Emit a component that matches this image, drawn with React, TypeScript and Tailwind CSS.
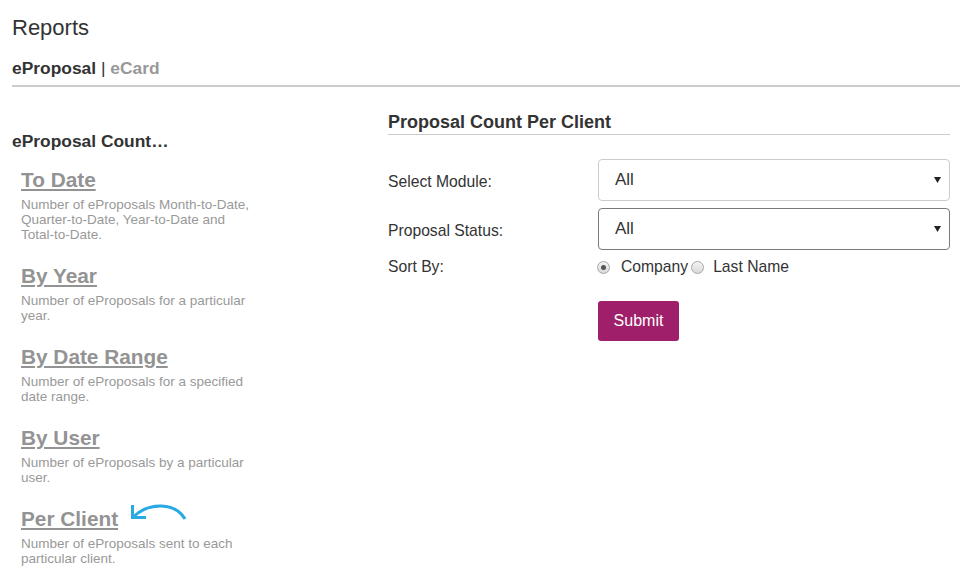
import { ChangeEvent, useState } from 'react';

interface ReportLink {
  title: string;
  desc: string;
}

const reportLinks: ReportLink[] = [
  {
    title: 'To Date',
    desc: 'Number of eProposals Month-to-Date, Quarter-to-Date, Year-to-Date and Total-to-Date.',
  },
  { title: 'By Year', desc: 'Number of eProposals for a particular year.' },
  { title: 'By Date Range', desc: 'Number of eProposals for a specified date range.' },
  { title: 'By User', desc: 'Number of eProposals by a particular user.' },
  { title: 'Per Client', desc: 'Number of eProposals sent to each particular client.' },
];

// Hand-drawn looking blue arrow pointing back at the "Per Client" link.
function CurvedArrow() {
  return (
    <svg
      width="58"
      height="22"
      viewBox="0 0 58 22"
      fill="none"
      stroke="#29abe2"
      strokeWidth="3"
      className="-mt-[8px] ml-[12px] shrink-0"
      aria-hidden="true"
    >
      <path d="M55 19 C45 2 19 2 3 17" />
      <path d="M2.5 5 L2.5 17.5 L16 17.5" />
    </svg>
  );
}

function SelectField({
  label,
  value,
  onChange,
  hovered,
}: {
  label: string;
  value: string;
  onChange: (e: ChangeEvent<HTMLSelectElement>) => void;
  hovered?: boolean;
}) {
  return (
    <div className="flex items-center">
      <label className="w-[210px] shrink-0 pt-[4px] text-[15.7px] text-[#333]">{label}</label>
      <div className="relative flex-1">
        <select
          value={value}
          onChange={onChange}
          className={`h-[42px] w-full appearance-none rounded-[4px] border bg-white pl-[16px] text-[17px] text-[#333] outline-none ${
            hovered ? 'border-[#7a7a7a]' : 'border-[#cccccc]'
          }`}
        >
          <option>All</option>
          <option>Active</option>
          <option>Archived</option>
        </select>
        {/* caret sits over the native select, which has appearance-none */}
        <svg
          width="7"
          height="6"
          viewBox="0 0 7 6"
          className="pointer-events-none absolute right-[9px] top-[18px]"
          aria-hidden="true"
        >
          <polygon points="0,0 7,0 3.5,6" fill="#222" />
        </svg>
      </div>
    </div>
  );
}

function Radio({ checked, label, onClick }: { checked: boolean; label: string; onClick: () => void }) {
  return (
    <button type="button" onClick={onClick} className="flex items-center">
      <span className="flex h-[13px] w-[13px] items-center justify-center rounded-full border border-[#a6a6a6] bg-gradient-to-b from-[#f4f4f4] to-[#d9d9d9]">
        {checked && <span className="h-[5px] w-[5px] rounded-full bg-[#555]" />}
      </span>
      <span className={`text-[15.7px] text-[#333] ${checked ? 'ml-[11px]' : 'ml-[9px]'}`}>{label}</span>
    </button>
  );
}

export default function App() {
  const [module, setModule] = useState('All');
  const [status, setStatus] = useState('All');
  const [sortBy, setSortBy] = useState<'company' | 'last'>('company');

  return (
    <div className="min-h-screen bg-white pl-3 pt-[13px] font-['Liberation_Sans',Arial,sans-serif] text-[#333]">
      <h1 className="text-[22px] leading-[29px]">Reports</h1>

      <div className="mt-[16px] text-[17.4px] leading-[20px]">
        <span className="font-bold text-[#333]">eProposal</span>
        <span className="text-[#333]"> | </span>
        <span className="font-bold text-[#999]">eCard</span>
      </div>
      <div className="mt-[7px] h-[2px] bg-[#cccccc]" />

      <div className="flex pr-[10px]">
        {/* report type list */}
        <div className="w-[376px] shrink-0">
          <h2 className="mt-[44px] text-[17.4px] font-bold leading-[20px] text-[#333]">eProposal Count…</h2>
          <ul className="mt-[18px] flex flex-col gap-[23px] pl-[9px]">
            {reportLinks.map((r) => (
              <li key={r.title} className="w-[236px]">
                <div className="flex items-start">
                  <a
                    href="#"
                    className="text-[20.8px] font-bold leading-[22px] text-[#939393] underline decoration-[2px] underline-offset-[2px]"
                  >
                    {r.title}
                  </a>
                  {r.title === 'Per Client' && <CurvedArrow />}
                </div>
                <p className="mt-[6px] text-[13.5px] leading-[15px] text-[#999]">{r.desc}</p>
              </li>
            ))}
          </ul>
        </div>

        {/* report form */}
        <div className="flex-1">
          <h2 className="mt-[25px] border-b border-[#cccccc] pb-[2px] text-[18px] font-bold leading-[20px] text-[#333]">
            Proposal Count Per Client
          </h2>

          <div className="mt-[24px] flex flex-col gap-[7px]">
            <SelectField label="Select Module:" value={module} onChange={(e) => setModule(e.target.value)} />
            <SelectField
              label="Proposal Status:"
              value={status}
              onChange={(e) => setStatus(e.target.value)}
              hovered
            />
            <div className="flex h-[20px] items-center">
              <span className="w-[210px] shrink-0 text-[15.7px] text-[#333]">Sort By:</span>
              <div className="-ml-[1px] flex items-center gap-[3px]">
                <Radio checked={sortBy === 'company'} label="Company" onClick={() => setSortBy('company')} />
                <Radio checked={sortBy === 'last'} label="Last Name" onClick={() => setSortBy('last')} />
              </div>
            </div>
          </div>

          <button
            type="button"
            className="ml-[210px] mt-[24px] h-[40px] w-[81px] rounded-[3px] bg-[#a01f6b] text-[16px] text-white"
          >
            Submit
          </button>
        </div>
      </div>
    </div>
  );
}
